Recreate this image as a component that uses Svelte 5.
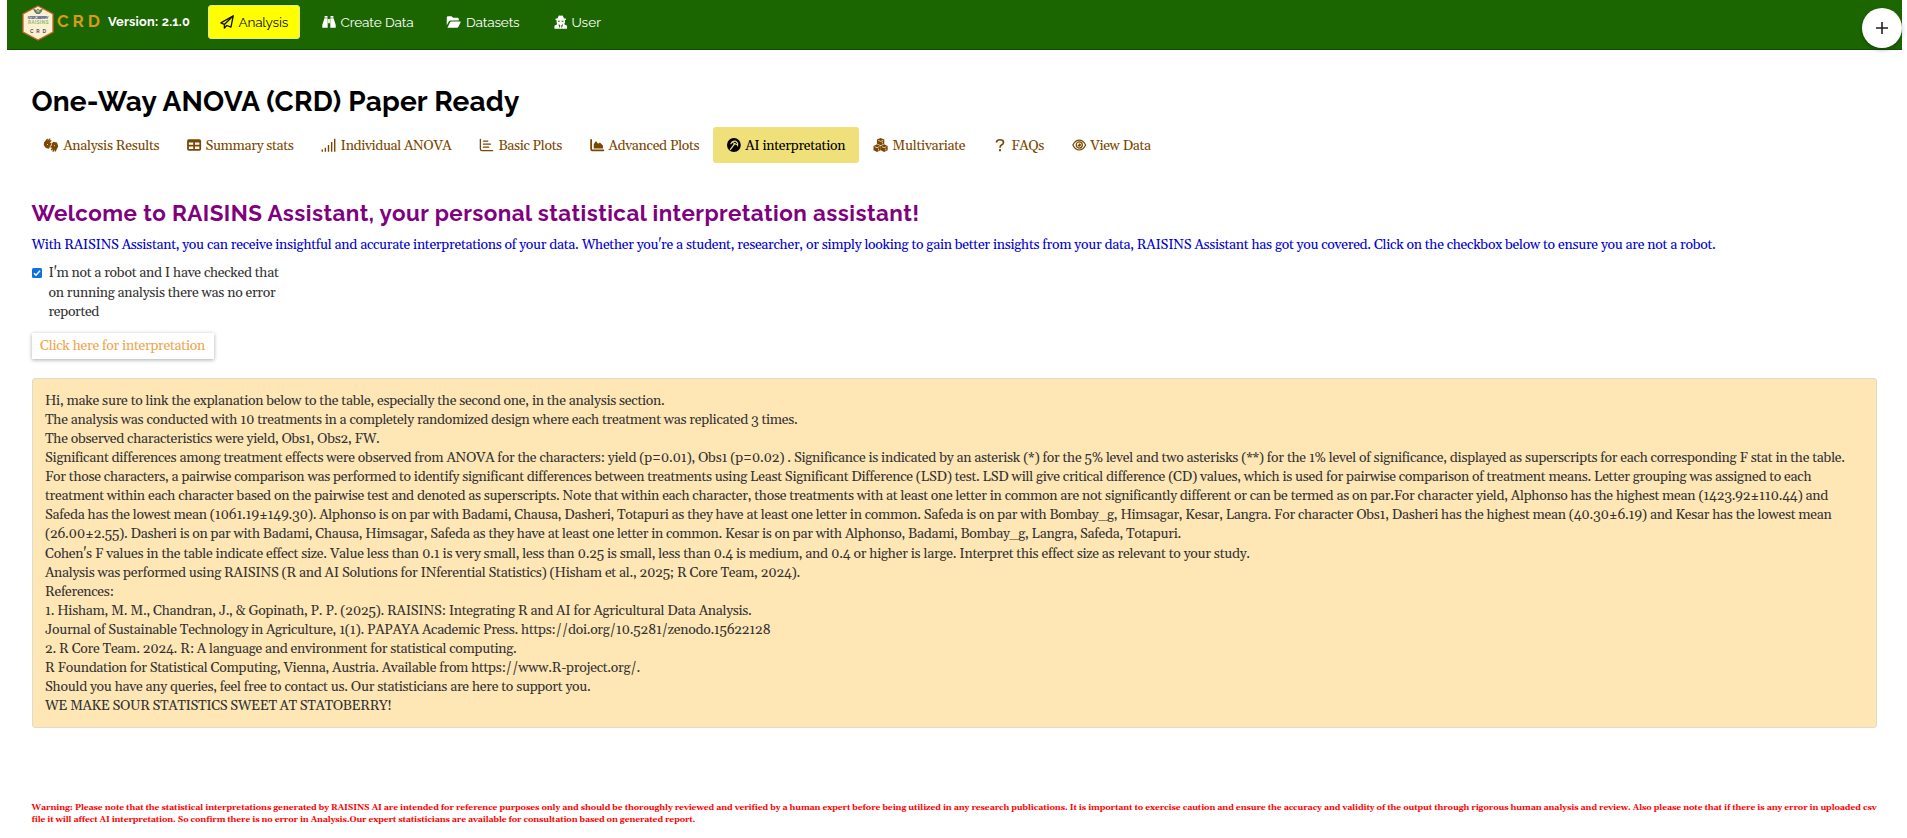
<script>
  // Spreads the letters of one text line evenly over a measure given in pixels.
  function fit(node, width) {
    const n = [...node.textContent].length;
    node.style.letterSpacing = '0px';
    const natural = node.getBoundingClientRect().width;
    node.style.letterSpacing = (width - natural) / n + 'px';
  }

  const menu = [
    { icon: 'plane', label: 'Analysis', w: 49.5, iw: 14, active: true },
    { icon: 'binoculars', label: 'Create Data', w: 73, iw: 14 },
    { icon: 'folder', label: 'Datasets', w: 53.5, iw: 15.5, pull: -1.5 },
    { icon: 'agent', label: 'User', w: 29.5, iw: 13.5 }
  ];

  const tabs = [
    { icon: 'hands', label: 'Analysis Results', w: 96, iw: 16 },
    { icon: 'table', label: 'Summary stats', w: 88, iw: 14.2 },
    { icon: 'signal', label: 'Individual ANOVA', w: 110.8, iw: 15.2 },
    { icon: 'bars', label: 'Basic Plots', w: 63.5, iw: 15 },
    { icon: 'area', label: 'Advanced Plots', w: 91, iw: 14.5 },
    { icon: 'palette', label: 'AI interpretation', w: 100, iw: 13.8 , active: true },
    { icon: 'cubes', label: 'Multivariate', w: 73, iw: 15.2 },
    { icon: 'question', label: 'FAQs', w: 32.5, iw: 14 },
    { icon: 'eye', label: 'View Data', w: 60.5, iw: 14.5 }
  ];

  const report = [
    ['Hi, make sure to link the explanation below to the table, especially the second one, in the analysis section.', 619.5],
    ['The analysis was conducted with 10 treatments in a completely randomized design where each treatment was replicated 3 times.', 752.5],
    ['The observed characteristics were yield, Obs1, Obs2, FW.', 334.5],
    ['Significant differences among treatment effects were observed from ANOVA for the characters: yield (p=0.01), Obs1 (p=0.02) . Significance is indicated by an asterisk (*) for the 5% level and two asterisks (**) for the 1% level of significance, displayed as superscripts for each corresponding F stat in the table.', 1797.5],
    ['For those characters, a pairwise comparison was performed to identify significant differences between treatments using Least Significant Difference (LSD) test. LSD will give critical difference (CD) values, which is used for pairwise comparison of treatment means. Letter grouping was assigned to each', 1764],
    ['treatment within each character based on the pairwise test and denoted as superscripts. Note that within each character, those treatments with at least one letter in common are not significantly different or can be termed as on par.For character yield, Alphonso has the highest mean (1423.92±110.44) and', 1782],
    ['Safeda has the lowest mean (1061.19±149.30). Alphonso is on par with Badami, Chausa, Dasheri, Totapuri as they have at least one letter in common. Safeda is on par with Bombay_g, Himsagar, Kesar, Langra. For character Obs1, Dasheri has the highest mean (40.30±6.19) and Kesar has the lowest mean', 1786.5],
    ['(26.00±2.55). Dasheri is on par with Badami, Chausa, Himsagar, Safeda as they have at least one letter in common. Kesar is on par with Alphonso, Badami, Bombay_g, Langra, Safeda, Totapuri.', 1136],
    ["Cohen's F values in the table indicate effect size. Value less than 0.1 is very small, less than 0.25 is small, less than 0.4 is medium, and 0.4 or higher is large. Interpret this effect size as relevant to your study.", 1204],
    ['Analysis was performed using RAISINS (R and AI Solutions for INferential Statistics) (Hisham et al., 2025; R Core Team, 2024).', 755],
    ['References:', 68.5],
    ['1. Hisham, M. M., Chandran, J., & Gopinath, P. P. (2025). RAISINS: Integrating R and AI for Agricultural Data Analysis.', 706.5],
    ['Journal of Sustainable Technology in Agriculture, 1(1). PAPAYA Academic Press. https://doi.org/10.5281/zenodo.15622128', 725.5],
    ['2. R Core Team. 2024. R: A language and environment for statistical computing.', 471.5],
    ['R Foundation for Statistical Computing, Vienna, Austria. Available from https://www.R-project.org/.', 595],
    ['Should you have any queries, feel free to contact us. Our statisticians are here to support you.', 545.5],
    ['WE MAKE SOUR STATISTICS SWEET AT STATOBERRY!', 346.5]
  ];

  const warning = [
    ['Warning: Please note that the statistical interpretations generated by RAISINS AI are intended for reference purposes only and should be thoroughly reviewed and verified by a human expert before being utilized in any research publications. It is important to exercise caution and ensure the accuracy and validity of the output through rigorous human analysis and review. Also please note that if there is any error in uploaded csv', 1844.5],
    ['file it will affect AI interpretation. So confirm there is no error in Analysis.Our expert statisticians are available for consultation based on generated report.', 663]
  ];

  const robot = [
    ["I'm not a robot and I have checked that", 230],
    ['on running analysis there was no error', 227],
    ['reported', 50.5]
  ];
</script>

{#snippet glyph(name, width)}
  <svg class="icon" style:width="{width}px" viewBox="0 0 16 16" fill="currentColor" aria-hidden="true">
    {#if name === 'plane'}
      <path fill="none" stroke="currentColor" stroke-width="1.500" stroke-linejoin="round" d="M15.200.8 1 9l4 1.800V15l2.800-3 4.700 1.800zM15.200.8 5 10.800" />
    {:else if name === 'binoculars'}
      <path d="M3 1h3.300v2H3zM9.700 1H13v2H9.700zM2.800 3.700h3.700v10.800H.3v-3zM9.500 3.700h3.700l2.500 7.800v3H9.500zM7 4.500h2v5H7z" />
    {:else if name === 'folder'}
      <path d="M0 11.800V3Q0 1.500 1.500 1.500h4l1.700 1.700h5q1.500 0 1.500 1.500v1.500H4.600q-1.500 0-2.200 1.100zM.8 14.500l3-6.200q.4-.8 1.300-.8h10.300q.9 0 .5.800l-2.700 5.400q-.4.800-1.300.800z" />
    {:else if name === 'agent'}
      <path d="M5.500.6Q6.500-.2 8 .7q1.500-.9 2.500-.1l1.200 3 2.600.6v1.400h-1.300v2.600l-.8 2.500 3.300 1.800V16H.5v-3.500l3.300-1.800L3 8.200V5.600H1.700V4.200l2.600-.6z" />
      <path fill="#1b6600" d="M4.500 6.400h3L6.500 7.600H5zM8.500 6.400h3l-.5 1.200H9.500zM6.300 11l1.100 1-.4 3.500L5.200 11zM9.700 11l-1.100 1 .4 3.500 1.800-4.500z" />
    {:else if name === 'hands'}
      <path d="M0 5.200 3.600.5l1 .8-1 1.800L6.700.3l.9.900-1.600 2 2-.9.700 1.100-2.300 1.900h2v1.800L6.800 9.300l-1 3-3.800-.9L-.3 8zM16.300 9.500l-3 6.200-1.200-.5.400-2.200-1.800 3-1.200-.6.900-2.500-1.700 1.400-.9-1 1.500-2.200-2 .1V9.400l2.100-1.300-.8-1.200L10.500 4.300l4.300.8z" />
      <path fill="#fff" d="M4 6.900a.5.500 0 1 0 .1 0M12 8.300a.5.500 0 1 0 .1 0" />
    {:else if name === 'table'}
      <path fill-rule="evenodd" d="M2 1.500h12q2 0 2 2v9q0 2-2 2H2q-2 0-2-2v-9q0-2 2-2zM2 5v2.700h5V5zM9 5v2.700h5V5zM2 9.700v2.800h5V9.700zM9 9.700v2.800h5V9.700z" />
    {:else if name === 'signal'}
      <path d="M0 13h1.600v2.700H0zM3.500 11h1.600v4.700H3.500zM7.100 8h1.600v7.700H7.100zM10.700 4.500h1.600v11.200h-1.600zM14.200.8h1.600v14.900h-1.600z" />
    {:else if name === 'bars'}
      <path fill="none" stroke="currentColor" stroke-width="1.500" stroke-linecap="round" d="M1 1.500v11q0 2 2 2h12M4.500 3.500h5M4.500 7h8M4.500 10.500h6" />
    {:else if name === 'area'}
      <path fill="none" stroke="currentColor" stroke-width="2" stroke-linecap="round" d="M1 2v10.500q0 1.500 1.500 1.500H15" />
      <path d="M4 12V7l2.500-3.500L9 6.500 11 5l3.500 3.500V12z" />
    {:else if name === 'palette'}
      <circle cx="8" cy="8" r="8" />
      <path fill="none" stroke="#efe07a" stroke-width="1.500" stroke-linecap="round" d="m4 13 5-6.500" />
      <path fill="none" stroke="#efe07a" stroke-width="1.300" stroke-linecap="round" d="M4.500 6.500Q6 3 10 3.500l2.300 2.500v3M7 5.500 11 7.500" />
    {:else if name === 'cubes'}
      <path d="m8 0 4.200 1.700v4.800L8 8.300 3.800 6.500V1.700zM3.900 7.200l4 1.800v5L3.900 16-.1 14V9zM12.100 7.200l4 1.800v5l-4 2-4-2V9z" />
      <path fill="none" stroke="#fff" stroke-width=".8" d="m5.200 2.700 2.800 1.200 2.800-1.200M10 4.200v2M1.300 9.900l2.600 1.200 2.600-1.200M9.500 9.900l2.600 1.200 2.600-1.200M5.700 12.300v2M13.900 12.300v2" />
    {:else if name === 'question'}
      <path fill="none" stroke="currentColor" stroke-width="1.900" d="M4 5.200Q4 2 8 2t4 3Q12 6.700 10 7.800T8 11" />
      <circle cx="8" cy="14" r="1.300" />
    {:else if name === 'eye'}
      <g fill="none" stroke="currentColor" stroke-width="1.400">
        <path d="M.7 8Q3.500 2.300 8 2.300T15.300 8Q12.500 13.700 8 13.700T.7 8z" />
        <circle cx="8" cy="8" r="3.500" />
      </g>
      <path d="M8 6a2 2 0 1 1-2 2q1.700.2 2-2z" />
    {/if}
  </svg>
{/snippet}

<header>
  <svg class="logo" viewBox="0 0 32 36" aria-hidden="true">
    <path d="M16 1 31 9v18l-15 8L1 27V9z" fill="#fbf0cf" stroke="#c8642b" stroke-width="1.300" />
    <path d="m11 3.500 3.500 1.500L16 3.500 17.500 5 21 3.500 19.500 7 17.500 9h-3l-2-2z" fill="#547d85" />
    <circle cx="16" cy="6" r="1.600" fill="#d3b44b" />
    <text x="5.500" y="14" textLength="21" font-size="4.200" font-weight="700" fill="#35518b">STATOBERRY</text>
    <text x="6" y="19" textLength="20.500" font-size="4.500" font-weight="700" fill="#89b86d">RAISINS</text>
    <text x="8" y="27.700" textLength="16" font-size="5" font-weight="700" fill="#574965">CRD</text>
  </svg>
  <span class="brand" use:fit={47}>CRD</span>
  <span class="version"><span use:fit={82}>Version: 2.1.0</span></span>
  <nav class="menu">
    {#each menu as m}
      <a class:active={m.active} style:margin-left="{m.pull ?? 0}px">{@render glyph(m.icon, m.iw)}<span use:fit={m.w}>{m.label}</span></a>
    {/each}
  </nav>
  <button class="add" aria-label="Add"><svg viewBox="0 0 14 14"><path d="M7 1v12M1 7h12" /></svg></button>
</header>

<main>
  <h1><span use:fit={488}>One-Way ANOVA (CRD) Paper Ready</span></h1>
  <nav class="tabs">
    {#each tabs as t}
      <a class:active={t.active}>{@render glyph(t.icon, t.iw)}<span use:fit={t.w}>{t.label}</span></a>
    {/each}
  </nav>
  <h2><span use:fit={888}>Welcome to RAISINS Assistant, your personal statistical interpretation assistant!</span></h2>
  <p class="intro"><span use:fit={1684}>With RAISINS Assistant, you can receive insightful and accurate interpretations of your data. Whether you're a student, researcher, or simply looking to gain better insights from your data, RAISINS Assistant has got you covered. Click on the checkbox below to ensure you are not a robot.</span></p>
  <div class="check">
    <svg viewBox="0 0 10 10"><rect width="10" height="10" rx="1.500" fill="#0b72e0" /><path d="m2 5.200 2 2L8 2.800" fill="none" stroke="#fff" stroke-width="1.500" /></svg>
    <div>
      {#each robot as [text, w]}<div class="line"><span use:fit={w}>{text}</span></div>{/each}
    </div>
  </div>
  <button class="run"><span use:fit={165}>Click here for interpretation</span></button>
  <section class="report">
    {#each report as [text, w]}<div class="line"><span use:fit={w}>{text}</span></div>{/each}
  </section>
  <footer>
    {#each warning as [text, w]}<div class="line"><span use:fit={w}>{text}</span></div>{/each}
  </footer>
</main>

<style>
  :global(body) { margin: 0; background: #fff; overflow: hidden; }
  span { display: inline-block; white-space: nowrap; }
  header {
    box-sizing: border-box;
    height: 50px;
    margin: 0 5px 0 7px;
    padding-left: 15px;
    background: #1b6600;
    border-bottom: 1px solid #174c08;
    display: flex;
    align-items: flex-start;
    font-family: Raleway, Inter, sans-serif;
    position: relative;
  }
  .logo { width: 32px; height: 36px; margin-top: 5px; flex: none; }
  .brand { margin-left: 3px; color: #d99a16; font-size: 17px; font-weight: 700; line-height: 42px; }
  .version { margin-left: 4px; color: #fff; font-size: 12.800px; font-weight: 700; line-height: 43px; width: 100px; }
  .menu { display: flex; margin-top: 5px; }
  .menu a {
    box-sizing: border-box;
    height: 34px;
    padding: 0 12px;
    margin-right: 10px;
    display: flex;
    align-items: center;
    gap: 4.500px;
    color: #fff;
    font-size: 13.600px;
    border-radius: 3px;
  }
  .menu .active { background: #ff0; color: #111; border: 1px solid #dfec8c; padding: 0 11px; }
  .icon { height: 14px; flex: none; overflow: visible; }
  .add {
    position: absolute;
    right: 0;
    top: 8px;
    width: 40px;
    height: 40px;
    border: 0;
    border-radius: 50%;
    background: #fff;
    box-shadow: 0 2px 4px #0004;
    display: grid;
    place-items: center;
    padding: 0;
  }
  .add svg { width: 14px; height: 14px; stroke: #222; stroke-width: 1.600; }
  main {
    padding: 0 30px 0 31.500px;
    font-family: Gelasio, Georgia, "Liberation Serif", serif;
    font-variant-numeric: oldstyle-nums;
    font-size: 14px;
    color: #333;
  }
  h1, h2 { font-family: Raleway, Inter, sans-serif; font-weight: 700; margin: 0; }
  h1 { margin-top: 34px; font-size: 28px; line-height: 36px; color: #000; height: 36px; }
  .tabs { display: flex; height: 36px; margin: 7px 0 0 -2.300px; }
  .tabs a { display: flex; align-items: center; gap: 4px; padding: 0 14px; color: #7b4700; border-radius: 3px; }
  .tabs a span { padding-top: 1px; }
  .tabs .active { background: #efe07a; color: #000; }
  h2 { margin-top: 36px; height: 28px; line-height: 28px; font-size: 22.400px; color: #800080; }
  .intro { margin: 8px 0 0; line-height: 20px; color: #0000d0; height: 20px; }
  .check { display: flex; margin-top: 9px; gap: 7px; line-height: 19.500px; }
  .check svg { width: 10px; height: 10px; margin-top: 4px; }
  .line { white-space: nowrap; }
  .check .line { height: 19.500px; }
  .run {
    display: block;
    margin-top: 10px;
    width: 182px;
    height: 26.500px;
    padding: 0;
    border: 0;
    background: #fff;
    box-shadow: 0 1px 4px #0005;
    font: inherit;
    color: #f0a64e;
  }
  .report {
    box-sizing: border-box;
    height: 350px;
    margin-top: 18.500px;
    padding: 13.500px 12.500px 12px;
    background: #ffe7b5;
    border: 1px solid #dfdccb;
    border-radius: 3px;
    line-height: 19.070px;
  }
  .report .line { height: 19.070px; }
  footer { margin-top: 74px; font-size: 8.600px; font-weight: 700; line-height: 12px; color: #f00; }
  footer .line { height: 12px; }
</style>
